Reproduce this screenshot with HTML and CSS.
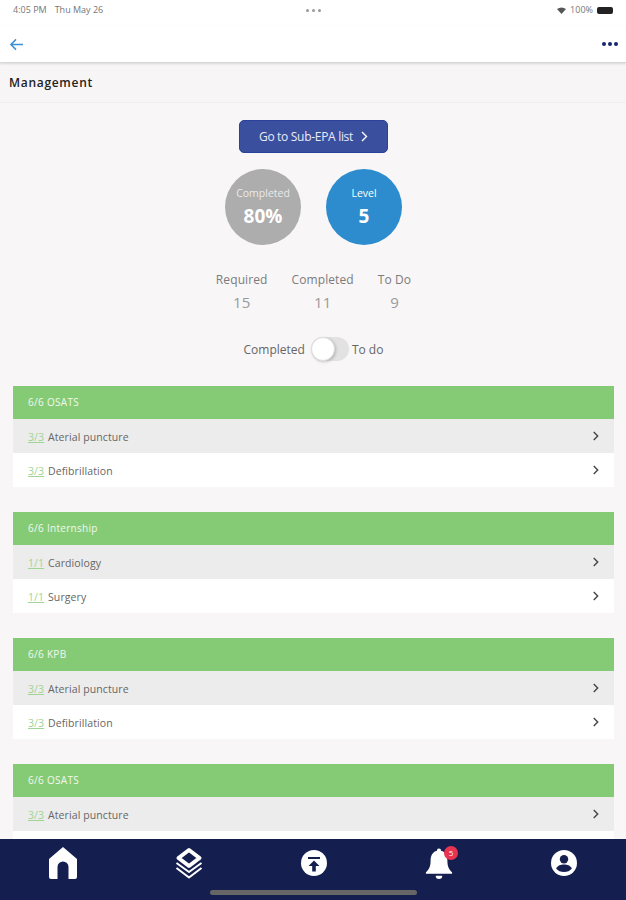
FILE: index.html
```html
<!DOCTYPE html>
<html lang="en">
<head>
  <meta charset="UTF-8" />
  <title>Management</title>
  <link rel="stylesheet" href="styles.css">
</head>
<body>
  <div class="app">
    <div class="status">
      <span class="status-left"><span>4:05 PM</span><span>Thu May 26</span></span>
      <span class="status-dots"><i></i><i></i><i></i></span>
      <span class="status-right">
        <svg width="9" height="7" viewBox="0 0 12 9"><path d="M0 2.600 Q6 -1.600 12 2.600 L6 9 Z" fill="#555"/></svg>
        <span>100%</span>
        <span class="battery"></span>
      </span>
    </div>

    <header class="topbar">
      <svg width="15" height="13" viewBox="0 0 16 14" fill="none" stroke="#3d8fd6" stroke-width="1.6"><path d="M15 7H2M7.500 1.500 2 7l5.500 5.500"/></svg>
      <span class="more"><i></i><i></i><i></i></span>
    </header>

    <div class="title">Management</div>

    <main class="content">
      <a class="sub-btn">Go to Sub-EPA list
        <svg width="8" height="11" viewBox="0 0 8 11" fill="none" stroke="#fff" stroke-width="1.4"><path d="m2 1 4.500 4.500L2 10"/></svg>
      </a>

      <div class="circles">
        <div class="circle grey"><span>Completed</span><b>80%</b></div>
        <div class="circle blue"><span>Level</span><b>5</b></div>
      </div>

      <div class="stats">
        <div class="stat"><span>Required</span><b>15</b></div>
        <div class="stat"><span>Completed</span><b>11</b></div>
        <div class="stat"><span>To Do</span><b>9</b></div>
      </div>

      <div class="toggle-row">
        <span>Completed</span>
        <span class="toggle"><span class="knob"></span></span>
        <span>To do</span>
      </div>

      <section class="group">
        <h3>6/6 OSATS</h3>
        <div class="row alt"><span class="label"><u>3/3</u> Aterial puncture</span><svg class="chev" viewBox="0 0 8 11"><path d="m2 1 4.500 4.500L2 10"/></svg></div>
        <div class="row"><span class="label"><u>3/3</u> Defibrillation</span><svg class="chev" viewBox="0 0 8 11"><path d="m2 1 4.500 4.500L2 10"/></svg></div>
      </section>

      <section class="group">
        <h3>6/6 Internship</h3>
        <div class="row alt"><span class="label"><u>1/1</u> Cardiology</span><svg class="chev" viewBox="0 0 8 11"><path d="m2 1 4.500 4.500L2 10"/></svg></div>
        <div class="row"><span class="label"><u>1/1</u> Surgery</span><svg class="chev" viewBox="0 0 8 11"><path d="m2 1 4.500 4.500L2 10"/></svg></div>
      </section>

      <section class="group">
        <h3>6/6 KPB</h3>
        <div class="row alt"><span class="label"><u>3/3</u> Aterial puncture</span><svg class="chev" viewBox="0 0 8 11"><path d="m2 1 4.500 4.500L2 10"/></svg></div>
        <div class="row"><span class="label"><u>3/3</u> Defibrillation</span><svg class="chev" viewBox="0 0 8 11"><path d="m2 1 4.500 4.500L2 10"/></svg></div>
      </section>

      <section class="group">
        <h3>6/6 OSATS</h3>
        <div class="row alt"><span class="label"><u>3/3</u> Aterial puncture</span><svg class="chev" viewBox="0 0 8 11"><path d="m2 1 4.500 4.500L2 10"/></svg></div>
      </section>
    </main>

    <nav class="tabs">
      <svg width="28" height="32" viewBox="0 0 28 32"><path d="M14 0 28 12V30a2 2 0 0 1-2 2H19.500V20a5.500 5.500 0 0 0-11 0V32H2a2 2 0 0 1-2-2V12Z" fill="#fff"/></svg>
      <svg width="28" height="32" viewBox="0 0 28 32" fill="none" stroke="#fff" stroke-width="2" stroke-linejoin="round"><path d="M14 3 24.500 11 14 19 3.500 11Z" stroke-width="4"/><path d="M1.500 16 14 25 26.500 16M1.500 21 14 30.500 26.500 21"/></svg>
      <svg width="26" height="26" viewBox="0 0 26 26"><circle cx="13" cy="13" r="13" fill="#fff"/><path d="M7 7h12v2H7zM13 10.500l5.500 5.500h-3.700v5.500h-3.600V16H7.500z" fill="#141f4f"/></svg>
      <span class="bell">
        <svg width="28" height="33" viewBox="0 0 30 34"><path d="M15 1a2.200 2.200 0 0 1 2.200 2.400C22 4.600 24 9 24 14c0 6 1.500 9 5 12.500v1.500H1v-1.500C4.500 23 6 20 6 14 6 9 8 4.600 12.800 3.400A2.200 2.200 0 0 1 15 1Z" fill="#fff"/><path d="M11.500 30h7a3.500 3.500 0 0 1-7 0Z" fill="#fff"/></svg>
        <span class="badge">5</span>
      </span>
      <svg width="26" height="26" viewBox="0 0 28 28"><circle cx="14" cy="14" r="14" fill="#fff"/><circle cx="14" cy="10" r="4.500" fill="#141f4f"/><path d="M5.500 20c1.500-3.500 5-4.500 8.500-4.500s7 1 8.500 4.500c-2 2.500-5 3.800-8.500 3.800S7.500 22.500 5.500 20Z" fill="#141f4f"/></svg>
      <span class="home-bar"></span>
    </nav>
  </div>
</body>
</html>
```

FILE: styles.css
```css
body {
  margin: 0;
  font-family: "Open Sans", "Noto Sans", sans-serif;
  color: #555;
}
.app {
  height: 900px;
  display: flex;
  flex-direction: column;
  overflow: hidden;
  background: #f8f6f7;
}
.status {
  height: 26px;
  box-sizing: border-box;
  padding: 4px 13px 0 13px;
  display: flex;
  align-items: flex-start;
  justify-content: space-between;
  background: #fff;
  font-size: 9px;
  line-height: 12px;
  color: #777;
}
.status-left {
  display: flex;
  gap: 8px;
  width: 150px;
}
.status-dots {
  display: flex;
  gap: 3px;
  margin-top: 5px;
}
.status-dots i {
  width: 3px;
  height: 3px;
  border-radius: 50%;
  background: #999;
}
.status-right {
  width: 150px;
  display: flex;
  align-items: center;
  justify-content: flex-end;
  gap: 4px;
}
.battery {
  width: 16px;
  height: 7px;
  border-radius: 2px;
  background: #222;
}
.topbar {
  height: 37px;
  box-sizing: border-box;
  padding: 0 8px 0 9px;
  display: flex;
  align-items: center;
  justify-content: space-between;
  background: #fff;
  border-bottom: 1px solid #d8d8d8;
  box-shadow: 0 1px 2px rgba(0,0,0,0.12);
  position: relative;
}
.more {
  display: flex;
  gap: 2px;
}
.more i {
  width: 4px;
  height: 4px;
  border-radius: 50%;
  background: #14286e;
}
.title {
  height: 40px;
  box-sizing: border-box;
  padding-left: 9px;
  display: flex;
  align-items: center;
  background: #f7f5f6;
  border-bottom: 1px solid #f0eeef;
  font-size: 12px;
  font-weight: 600;
  letter-spacing: 0.7px;
  color: #222;
}
.content {
  flex: 1;
  min-height: 0;
  overflow: hidden;
  padding: 17px 12px 0 13px;
  display: flex;
  flex-direction: column;
}
.sub-btn {
  flex: none;
  align-self: center;
  width: 149px;
  height: 33px;
  box-sizing: border-box;
  display: flex;
  align-items: center;
  justify-content: center;
  gap: 7px;
  background: #3b4f9f;
  border: 1px solid #2a4299;
  border-radius: 5px;
  color: #e8ebf6;
  font-size: 12px;
  letter-spacing: -0.3px;
}
.circles {
  flex: none;
  margin-top: 16px;
  display: flex;
  justify-content: center;
  gap: 25px;
}
.circle {
  width: 76px;
  height: 76px;
  border-radius: 50%;
  display: flex;
  flex-direction: column;
  align-items: center;
  justify-content: center;
  color: #fff;
  font-size: 10.5px;
}
.circle span {
  line-height: 14px;
  opacity: 0.75;
}
.circle b {
  margin-top: 4px;
  font-size: 19px;
  line-height: 25px;
}
.grey {
  background: #adadad;
}
.blue {
  background: #2d8ccd;
}
.blue span {
  opacity: 1;
}
.stats {
  flex: none;
  margin-top: 26px;
  display: flex;
  justify-content: center;
  gap: 24px;
}
.stat {
  display: flex;
  flex-direction: column;
  align-items: center;
  font-size: 12px;
  letter-spacing: 0.1px;
  color: #7c7c7c;
}
.stat span {
  line-height: 17px;
}
.stat b {
  margin-top: 3px;
  font-size: 15px;
  font-weight: 400;
  line-height: 22px;
  color: #9a9a9a;
}
.toggle-row {
  flex: none;
  margin-top: 24px;
  display: flex;
  justify-content: center;
  align-items: center;
  gap: 3px;
  font-size: 12px;
  color: #666;
}
.toggle {
  margin-left: 3px;
  width: 38px;
  height: 24px;
  border-radius: 12px;
  background: #e2e2e2;
  display: flex;
}
.knob {
  width: 24px;
  height: 24px;
  box-sizing: border-box;
  border-radius: 50%;
  background: #fff;
  border: 1px solid #ddd;
  box-shadow: 1px 1px 3px rgba(0,0,0,0.2);
}
.group {
  flex: none;
  margin-top: 25px;
  background: #fff;
}
.group:last-child {
  padding-bottom: 34px;
}
.group h3 {
  margin: 0;
  height: 33px;
  box-sizing: border-box;
  padding: 0 0 1px 15px;
  display: flex;
  align-items: center;
  background: #85cb76;
  color: #f2f8ee;
  font-size: 10px;
  font-weight: 400;
  letter-spacing: 0.3px;
}
.row {
  height: 34px;
  padding: 0 15px 0 15px;
  display: flex;
  align-items: center;
  justify-content: space-between;
  font-size: 10.5px;
  letter-spacing: 0.1px;
  color: #666;
}
.label {
  padding-top: 2px;
}
.alt {
  background: #ececec;
}
.row u {
  margin-right: 1px;
  color: #a0d495;
}
.chev {
  width: 7px;
  height: 10px;
  fill: none;
  stroke: #444;
  stroke-width: 1.6;
}
.tabs {
  flex: none;
  height: 61px;
  padding: 0 49px 13px 49px;
  box-sizing: border-box;
  display: flex;
  align-items: center;
  justify-content: space-between;
  background: #141f4f;
  position: relative;
}
.bell {
  position: relative;
  display: flex;
}
.badge {
  position: absolute;
  top: -1px;
  right: -5px;
  width: 14px;
  height: 14px;
  border-radius: 50%;
  background: #e8344e;
  color: #fff;
  font-size: 8px;
  line-height: 14px;
  text-align: center;
}
.home-bar {
  position: absolute;
  left: 210px;
  bottom: 5px;
  width: 207px;
  height: 5px;
  border-radius: 3px;
  background: #666;
}
```
